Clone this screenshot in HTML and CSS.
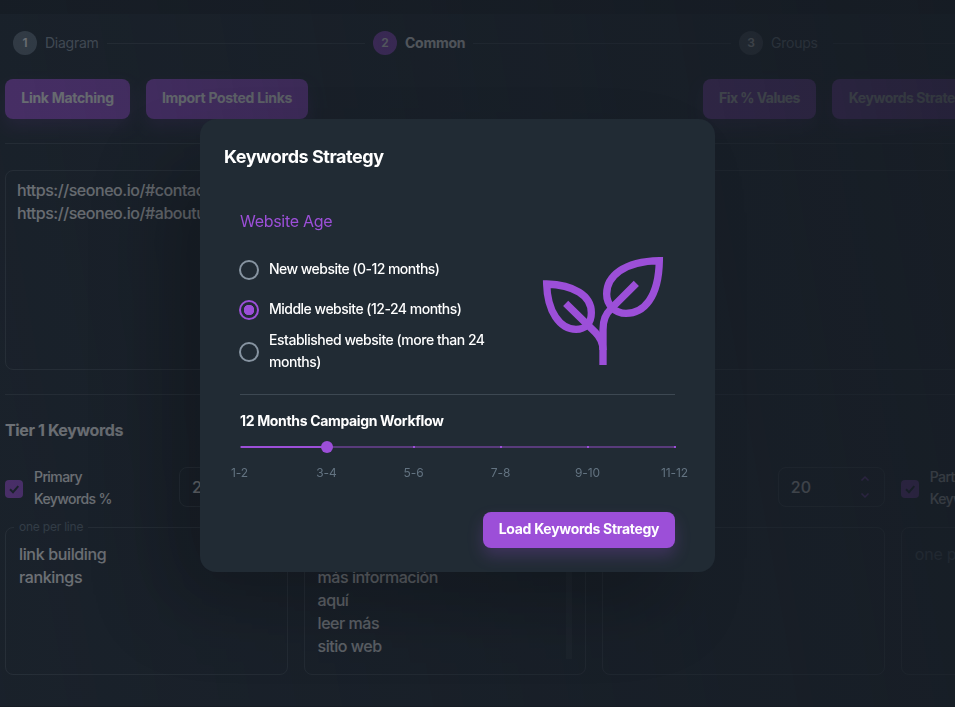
FILE: index.html
```html
<!DOCTYPE html>
<html lang="en">
<head>
<meta charset="utf-8">
<title>Keywords Strategy</title>
<link rel="stylesheet" href="styles.css">
</head>
<body>
<div class="page">
  <header class="topbar"></header>
  <main class="content">
    <div class="stepper">
      <div class="step"><span class="num done">1</span><span class="step-label">Diagram</span></div>
      <i class="line line-a"></i>
      <div class="step"><span class="num active">2</span><span class="step-label current">Common</span></div>
      <i class="line line-b"></i>
      <div class="step"><span class="num">3</span><span class="step-label groups">Groups</span></div>
      <i class="line line-c"></i>
    </div>
    <div class="actions">
      <button class="btn link-matching">Link Matching</button>
      <button class="btn import">Import Posted Links</button>
      <button class="btn fix">Fix % Values</button>
      <button class="btn strategy">Keywords Strategy</button>
    </div>
    <hr>
    <div class="field urls">https://seoneo.io/#contact<br>https://seoneo.io/#aboutus</div>
    <hr class="second">
    <h2>Tier 1 Keywords</h2>
    <div class="columns">
      <section>
        <div class="percent">
          <span class="check"><svg viewBox="0 0 18 18"><path d="M5 9.3 8 12.2 13.3 6.2"/></svg></span>
          <label>Primary<br>Keywords %</label>
          <div class="number"><span>20</span></div>
        </div>
        <fieldset class="field words"><legend>one per line</legend>link building<br>rankings</fieldset>
      </section>
      <section>
        <div class="percent"></div>
        <div class="field words scroll"><div>click here<br>más información<br>aquí<br>leer más<br>sitio web</div><i class="thumb"></i></div>
      </section>
      <section>
        <div class="percent">
          <div class="number"><span>20</span>
            <svg class="arrows" viewBox="0 0 12 28"><path d="M2.5 7.5 6 4 9.5 7.5M2.5 20.5 6 24 9.5 20.5"/></svg>
          </div>
        </div>
        <div class="field words"></div>
      </section>
      <section>
        <div class="percent">
          <span class="check"><svg viewBox="0 0 18 18"><path d="M5 9.3 8 12.2 13.3 6.2"/></svg></span>
          <label>Partial<br>Keywords %</label>
        </div>
        <div class="field words hint">one per line</div>
      </section>
    </div>
  </main>
</div>
<div class="backdrop">
  <div class="dialog">
    <h1>Keywords Strategy</h1>
    <div class="dialog-body">
      <div class="age">
        <div class="choices">
          <h3>Website Age</h3>
          <div class="choice"><span class="radio"></span><span class="c1">New website (0-12 months)</span></div>
          <div class="choice"><span class="radio on"></span><span class="c2">Middle website (12-24 months)</span></div>
          <div class="choice tall"><span class="radio"></span><span class="c3">Established website (more than 24<br>months)</span></div>
        </div>
        <svg class="plant" viewBox="60 39 378 345">
          <path d="M418 62C310 64 260 110 260 162C260 195 285 220 318 220C370 220 416 175 418 62Z"/>
          <path d="M80 132C160 135 214 165 214 218C214 250 195 268 168 268C120 268 82 215 80 132Z"/>
          <path d="M249 375V270C249 240 256 223 275 204L349 130"/>
          <path d="M137 190L226 277C240 291 249 310 249 330"/>
        </svg>
      </div>
      <div class="workflow">
        <h4>12 Months Campaign Workflow</h4>
        <div class="slider"><i class="fill"></i><i class="knob"></i><i class="dot"></i><i class="dot"></i><i class="dot"></i><i class="dot"></i></div>
        <div class="marks"><span>1-2</span><span>3-4</span><span>5-6</span><span>7-8</span><span>9-10</span><span>11-12</span></div>
      </div>
      <button class="btn load">Load Keywords Strategy</button>
    </div>
  </div>
</div>
</body>
</html>
```
FILE: styles.css
```css
* { box-sizing: border-box; }
body { margin: 0; width: 955px; height: 707px; overflow: hidden; background: #212b36; color: #fff; font: 500 16px/23px Inter, "Liberation Sans", sans-serif; }
h1, h2, h3, h4 { margin: 0; }
.page { height: 707px; overflow: hidden; border-bottom: 1px solid #161c24; }
.topbar { height: 14px; background: #192029; }
.content { width: 1180px; margin-left: 5px; }
.stepper { display: flex; align-items: center; height: 24px; margin: 17px 0 24px 8px; }
.step { display: flex; align-items: center; gap: 8px; }
.num { width: 24px; height: 24px; border-radius: 50%; background: #56616d; font-size: 12px; line-height: 24px; text-align: center; font-weight: 600; }
.num.done { background: #637381; }
.num.active { background: #9c4fd8; }
.step-label { font-size: 14px; font-weight: 400; color: #919eab; width: 54px; padding-bottom: 2px; letter-spacing: -.25px; white-space: nowrap; }
.step-label.current { width: 60px; font-weight: 700; color: #fff; }
.line { height: 1px; background: #3e4954; }
.line-a { width: 258px; margin: 0 8px; }
.line-b { width: 258px; margin: 0 8px; }
.line-c { width: 340px; margin-left: 8px; }
.actions { display: flex; gap: 16px; height: 40px; }
.btn { border: 0; padding: 0 0 2px; border-radius: 8px; background: #9c4fd8; box-shadow: 0 8px 16px rgb(156 79 216 / .24); color: #fff; font: 700 14px/24px Inter, sans-serif; letter-spacing: -.3px; white-space: nowrap; }
.link-matching { width: 125px; }
.import { width: 162px; }
.fix { width: 113px; margin-left: 379px; letter-spacing: -.55px; }
.strategy { width: 156px; letter-spacing: -.45px; }
hr { border: 0; height: 1px; margin: 24px 0 26px; background: #3e4954; }
.field { border: 1px solid #414c57; border-radius: 8px; }
.urls { height: 200px; padding: 8px 11px; letter-spacing: -.45px; }
hr.second { margin: 24px 0 23px; }
h2 { font-size: 16px; line-height: 24px; font-weight: 700; letter-spacing: -.38px; }
.columns { display: grid; grid-template-columns: repeat(4, 282.6px); gap: 16px; margin-top: 25px; }
.percent { display: flex; align-items: center; height: 44px; margin-bottom: 17px; position: relative; }
.check { width: 18px; height: 18px; border-radius: 4px; background: #9c4fd8; }
.check svg { display: block; fill: none; stroke: #212b36; stroke-width: 2; }
.percent label { width: 145px; margin-left: 11px; padding-bottom: 2px; font-size: 14px; line-height: 22px; letter-spacing: -.6px; }
.number { flex: none; width: 107px; height: 40px; margin-top: -4px; border: 1px solid #414c57; border-radius: 8px; padding: 8px 13px 8px 12px; display: flex; justify-content: space-between; align-items: center; }
.percent .number:first-child { margin-left: auto; }
.arrows { width: 12px; height: 28px; fill: none; stroke: #9c4fd8; stroke-width: 1.5; }
.words { height: 148px; margin: -1px 0 0; padding: 15px 13px; line-height: 23px; letter-spacing: -.47px; }
fieldset.words { height: 156px; margin-top: -9px; padding: 8px 13px; letter-spacing: -.35px; }
legend { margin-left: -5px; padding: 0 5px; font-size: 12px; line-height: 16px; letter-spacing: -.22px; font-weight: 400; color: #637381; }
.scroll { display: flex; justify-content: space-between; }
.thumb { width: 6px; height: 116px; background: #303b46; }
.hint { color: #637381; font-weight: 400; letter-spacing: -.2px; }
.backdrop { position: fixed; inset: 0; padding: 119px 0 0 200px; background: linear-gradient(80deg, rgb(22 28 36 / .61), rgb(22 28 36 / .89)); }
.dialog { width: 515px; height: 453px; padding: 24px; border-radius: 16px; background: #212b34; box-shadow: -40px 40px 80px -8px rgb(0 0 0 / .24); }
h1 { font-size: 18px; line-height: 28px; font-weight: 700; letter-spacing: -.46px; }
.dialog-body { padding: 38px 16px 0; display: flex; flex-direction: column; }
.age { display: flex; justify-content: space-between; height: 186px; border-bottom: 1px solid #3d4852; }
h3 { font-size: 16px; line-height: 24px; font-weight: 400; color: #9c4fd8; margin-bottom: 17px; letter-spacing: -.3px; white-space: nowrap; }
.choice { height: 40px; display: flex; align-items: center; gap: 10px; margin-left: -1px; font-size: 14px; line-height: 22px; white-space: nowrap; }
.choice.tall { height: 44px; }
.c1 { letter-spacing: -.54px; }
.c2 { letter-spacing: -.51px; }
.c3 { letter-spacing: -.47px; }
.c1, .c2, .c3 { padding-bottom: 2px; }
.radio { width: 20px; height: 20px; border: 2px solid #8794a1; border-radius: 50%; }
.radio.on { border-color: #9c4fd8; background: radial-gradient(circle, #9c4fd8 5px, transparent 5.5px); }
.plant { width: 126px; height: 115px; margin: 44px 9px 0 0; fill: none; stroke: #9c4fd8; stroke-width: 22; }
h4 { font-size: 14px; line-height: 22px; font-weight: 700; margin-top: 15px; letter-spacing: -.34px; }
.slider { position: relative; width: 436px; height: 2px; margin-top: 14px; background: #593b7b; display: flex; justify-content: space-between; padding-left: 173px; }
.fill { position: absolute; left: 1px; width: 86px; height: 2px; background: #9c4fd8; }
.knob { position: absolute; left: 81px; top: -5px; width: 12px; height: 12px; border-radius: 50%; background: #9c4fd8; }
.dot { width: 2px; height: 2px; background: #9c4fd8; }
.marks { display: grid; grid-template-columns: repeat(6, 87px); margin: 15px -44px 0; font-size: 12px; line-height: 20px; text-align: center; color: #637381; font-weight: 400; letter-spacing: -.1px; }
.load { width: 192px; height: 36px; margin: 29px 0 0 auto; }
```
